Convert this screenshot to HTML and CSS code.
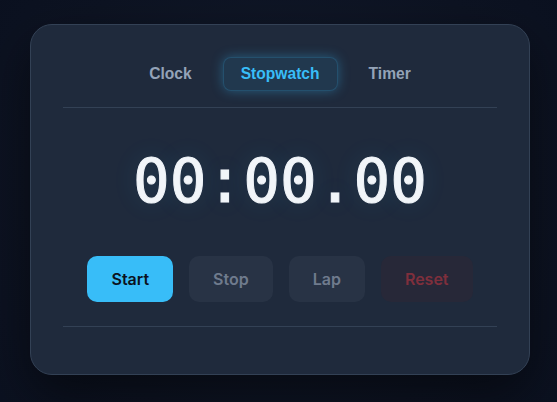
FILE: index.html
```html
<!DOCTYPE html>
<html lang="en">
<head>
    <meta charset="UTF-8">
    <title>Stopwatch</title>
    <meta name="viewport" content="width=device-width, initial-scale=1.0">
    <link rel="stylesheet" href="styles.css">
</head>
<body>

    <main class="card">

        <!-- Mode tabs -->
        <nav class="tabs">
            <button class="tab">Clock</button>
            <button class="tab active">Stopwatch</button>
            <button class="tab">Timer</button>
        </nav>

        <div class="display">00:00.00</div>

        <div class="controls">
            <button class="btn btn-start">Start</button>
            <button class="btn btn-muted" disabled>Stop</button>
            <button class="btn btn-muted" disabled>Lap</button>
            <button class="btn btn-reset" disabled>Reset</button>
        </div>

        <ul class="laps"></ul>

    </main>

</body>
</html>
```

FILE: styles.css
```css
* {
    box-sizing: border-box;
}

body {
    margin: 0;
    padding: 0 0 3px 3px;
    min-height: 100vh;
    display: flex;
    align-items: center;
    justify-content: center;
    font-family: 'Liberation Sans', Arial, sans-serif;
    background: radial-gradient(circle at 50% 45%, #121a2c 0%, #0d1322 70%, #0b1120 100%);
}

.card {
    width: 500px;
    padding: 32px;
    background: #1f2a3c;
    border: 1px solid #334155;
    border-radius: 22px;
    box-shadow: 0 20px 50px rgba(0, 0, 0, 0.5);
}

.tabs {
    display: flex;
    justify-content: center;
    gap: 13px;
    padding-bottom: 16px;
    border-bottom: 1px solid #334155;
}

.tab {
    font-family: 'Liberation Sans', Arial, sans-serif;
    font-size: 15.6px;
    font-weight: bold;
    color: #94a3b8;
    background: none;
    border: 1px solid transparent;
    border-radius: 8px;
    padding: 0 17px;
    height: 34px;
    cursor: pointer;
}

    .tab.active {
        color: #38bdf8;
        background: rgba(56, 189, 248, 0.1);
        border-color: rgba(56, 189, 248, 0.18);
        box-shadow: 0 0 12px rgba(56, 189, 248, 0.35);
    }

.display {
    font-family: 'DejaVu Sans Mono', monospace;
    font-weight: normal;
    font-size: 61px;
    line-height: 74px;
    text-align: center;
    color: #f1f5f9;
    -webkit-text-stroke: 1px #f1f5f9;
    margin: 36px 0 38px;
    text-shadow: 0 0 24px rgba(56, 189, 248, 0.15);
}

.controls {
    display: flex;
    justify-content: center;
    gap: 16px;
}

.btn {
    font-family: Inter, 'Liberation Sans', sans-serif;
    font-size: 16px;
    font-weight: 600;
    height: 46px;
    padding: 0 24px;
    border: none;
    border-radius: 10px;
    cursor: pointer;
}

.btn-start {
    background: #38bdf8;
    color: #0b1220;
}

.btn-muted {
    background: #283345;
    color: #6f7b8d;
}

.btn-reset {
    background: #272838;
    color: #7f2f3c;
}

.laps {
    list-style: none;
    margin: 24px 0 0;
    padding: 0;
    min-height: 16px;
    border-top: 1px solid #334155;
}
```
